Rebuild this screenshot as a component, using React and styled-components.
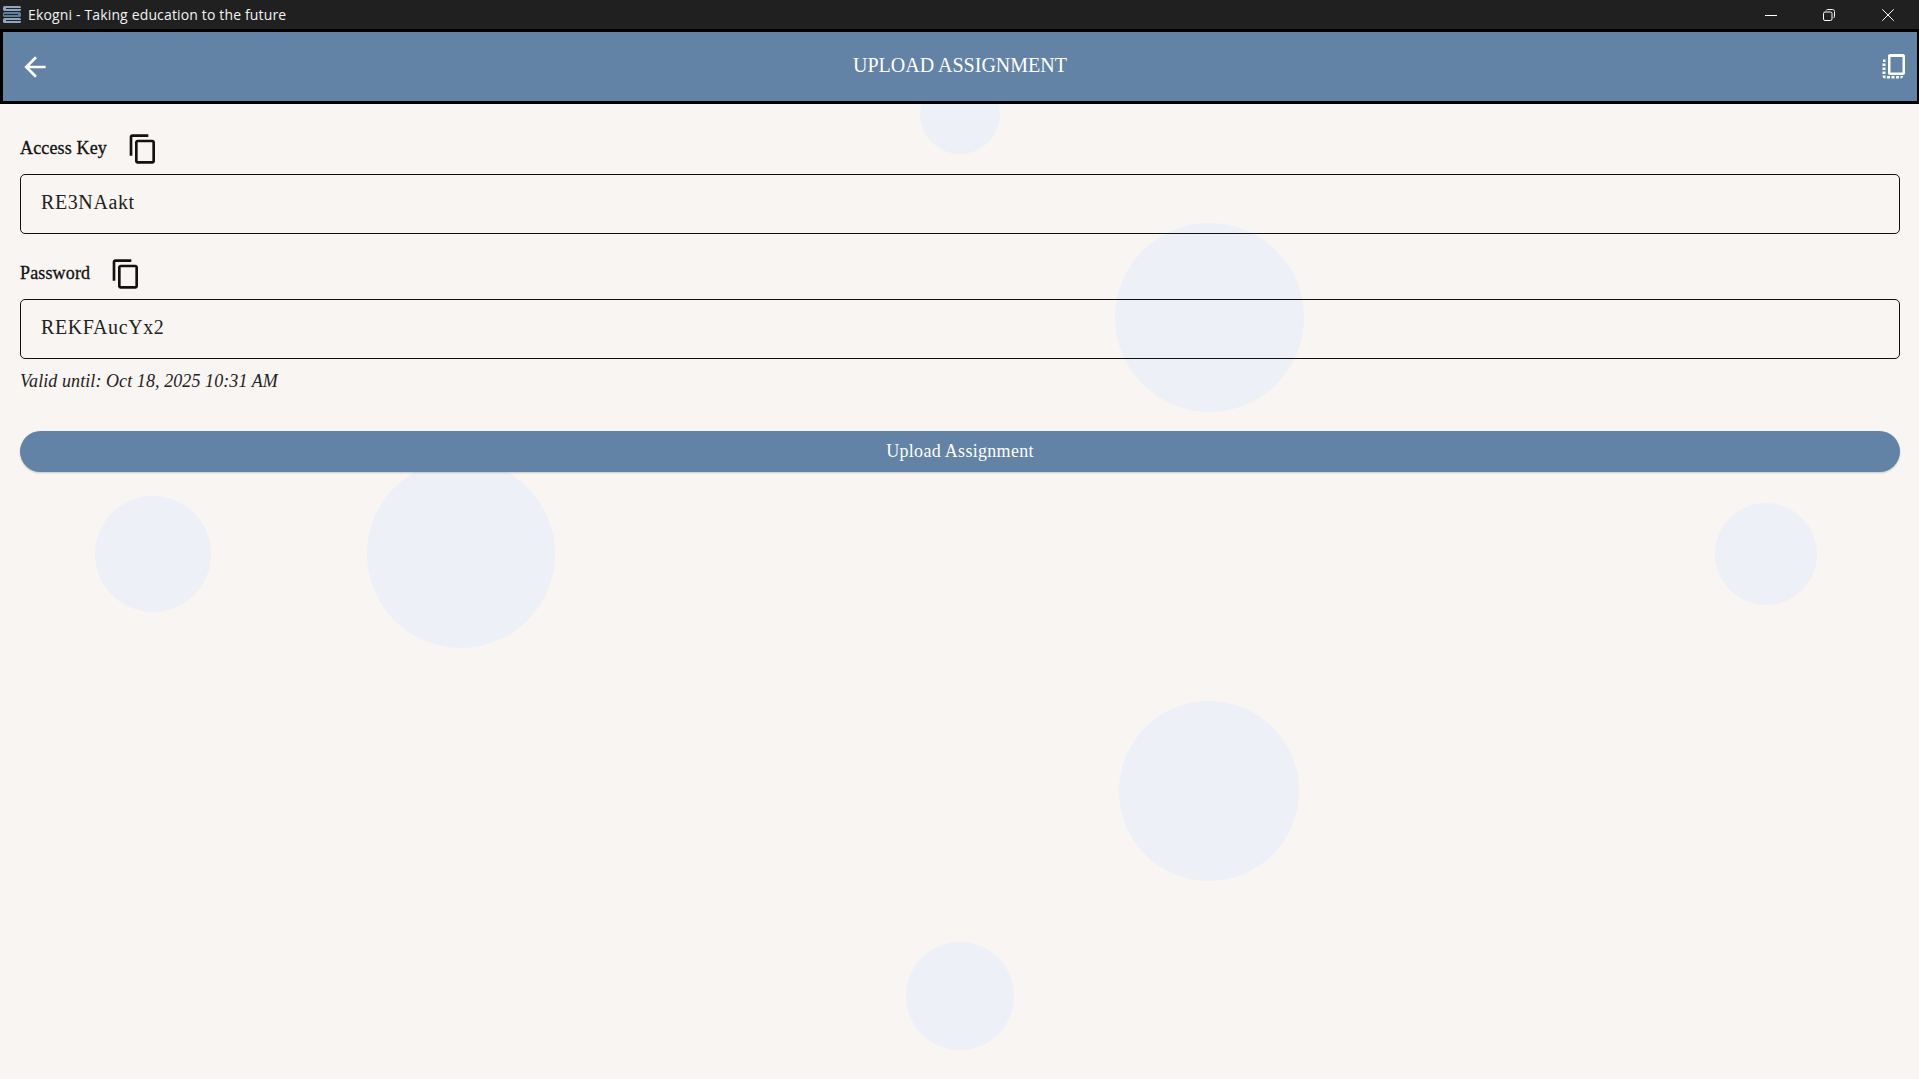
import styled, { createGlobalStyle } from "styled-components";

const blue = "#6282a6";
const serif = '"Liberation Serif", "DejaVu Serif", serif';

const GlobalStyle = createGlobalStyle`
  html, body {
    margin: 0;
    padding: 0;
    height: 100%;
    background: #f9f5f2;
  }
`;

const bubbles = [
  { x: 960, y: 114, r: 40 },
  { x: 1209.5, y: 317.5, r: 94.5 },
  { x: 460.5, y: 554, r: 94 },
  { x: 153, y: 554, r: 58 },
  { x: 1766, y: 554, r: 51 },
  { x: 1209, y: 790.5, r: 90 },
  { x: 959.5, y: 995.5, r: 54 },
];

const CopyIcon = () => (
  <svg width="32" height="32" viewBox="0 0 24 24" fill="#111">
    <path d="M16 1H4c-1.1 0-2 .9-2 2v14h2V3h12V1zm3 4H8c-1.1 0-2 .9-2 2v14c0 1.1.9 2 2 2h11c1.1 0 2-.9 2-2V7c0-1.1-.9-2-2-2zm0 16H8V7h11v14z" />
  </svg>
);

const CopyField = ({ label, value }) => (
  <Field>
    <LabelRow>
      <Label>{label}</Label>
      <IconBtn>
        <CopyIcon />
      </IconBtn>
    </LabelRow>
    <ValueBox>{value}</ValueBox>
  </Field>
);

const App = () => {
  return (
    <Page>
      <GlobalStyle />
      {bubbles.map((b, i) => (
        <Bubble
          key={i}
          style={{ left: b.x - b.r, top: b.y - b.r, width: b.r * 2, height: b.r * 2 }}
        />
      ))}
      <TitleBar>
        <AppIcon width="18" height="17" viewBox="0 0 18 17">
          <rect x="0" y="0" width="18" height="5" rx="1.5" fill="#8fa6bd" />
          <rect x="0" y="6" width="18" height="5" rx="1.5" fill="#5f7f9f" />
          <rect x="0" y="12" width="18" height="5" rx="1.5" fill="#8fa6bd" />
          <rect x="3" y="2" width="15" height="1" fill="#1c2630" />
          <rect x="1" y="8" width="14" height="1" fill="#1c2630" />
          <rect x="3" y="14" width="15" height="1" fill="#1c2630" />
        </AppIcon>
        <WindowTitle>Ekogni - Taking education to the future</WindowTitle>
        <WindowControls>
          <WinBtn>
            <svg width="12" height="12" viewBox="0 0 12 12" stroke="#fff" fill="none">
              <path d="M0 6.5h12" />
            </svg>
          </WinBtn>
          <WinBtn>
            <svg width="12" height="12" viewBox="0 0 12 12" stroke="#fff" fill="none">
              <rect x="0.5" y="3" width="8.5" height="8.5" rx="1.5" />
              <path d="M3 1.5C3.4 .8 4 .5 4.8 .5H9.5c1.2 0 2 .8 2 2V7.2c0 .8-.3 1.4-1 1.8" />
            </svg>
          </WinBtn>
          <WinBtn>
            <svg width="12" height="12" viewBox="0 0 12 12" stroke="#fff" fill="none">
              <path d="M.3.3l11.4 11.4M11.7.3L.3 11.7" />
            </svg>
          </WinBtn>
        </WindowControls>
      </TitleBar>
      <Header>
        <BackIcon width="32" height="32" viewBox="0 0 24 24" fill="#fff">
          <path d="M20 11H7.83l5.59-5.59L12 4l-8 8 8 8 1.41-1.41L7.83 13H20v-2z" />
        </BackIcon>
        <HeaderTitle>UPLOAD ASSIGNMENT</HeaderTitle>
        <svg width="24" height="28" viewBox="0 0 24 28" fill="#fff">
          <path d="M7 1.5C6 1.5 6 2.5 6 3v17c0 1 .8 2 2 2h13c1.200 0 2-1 2-2V3c0-1-.8-2-2-2H8zm1.500 2.500h12v15.500h-12z" fillRule="evenodd" />
          <path d="M1 6.500h2.500V9H1zM0.500 10.500h3V13h-3zM0.500 14.500h3V17h-3zM0.500 18.500h3V21h-3zM0.500 22.500h3V25.500C1.500 25.500 .5 24.500 .5 22.500zM5 23h3v2.500H5zM9.500 23h3v2.500h-3zM14 23h3v2.500h-3zM18.500 23h2.500c0 1.500-1 2.500-2.500 2.500z" />
        </svg>
      </Header>
      <Main>
        <CopyField label="Access Key" value="RE3NAakt" />
        <CopyField label="Password" value="REKFAucYx2" />
        <ValidUntil>Valid until: Oct 18, 2025 10:31 AM</ValidUntil>
        <UploadButton>Upload Assignment</UploadButton>
      </Main>
    </Page>
  );
};

const Page = styled.div`
  position: relative;
  height: 1079px;
  overflow: hidden;
  background: #f9f5f2;
  font-family: ${serif};
`;
const Bubble = styled.div`
  position: absolute;
  border-radius: 50%;
  background: #edf0f6;
`;
const TitleBar = styled.div`
  position: relative;
  display: flex;
  align-items: center;
  height: 29px;
  padding-left: 3px;
  background: #202020;
`;
const AppIcon = styled.svg`
  flex: none;
`;
const WindowTitle = styled.span`
  margin-left: 7px;
  font-family: "Open Sans", "Noto Sans", sans-serif;
  font-size: 14px;
  letter-spacing: 0.15px;
  color: #f2f2f2;
`;
const WindowControls = styled.div`
  display: flex;
  margin-left: auto;
  margin-right: 2px;
`;
const WinBtn = styled.div`
  display: flex;
  align-items: center;
  justify-content: center;
  width: 58.500px;
  height: 29px;
`;
const Header = styled.header`
  position: relative;
  display: flex;
  align-items: center;
  justify-content: space-between;
  box-sizing: border-box;
  height: 75px;
  padding: 0 11px 0 16px;
  background: ${blue};
  border: solid #000;
  border-width: 3px 2px 3px 3px;
`;
const BackIcon = styled.svg`
  flex: none;
`;
const HeaderTitle = styled.h1`
  position: absolute;
  left: 0;
  right: 0;
  margin: 0 0 2px;
  text-align: center;
  font-size: 20px;
  font-weight: 400;
  color: #fff;
`;
const Main = styled.main`
  position: relative;
  display: flex;
  flex-direction: column;
  gap: 13px;
  padding: 18px 19px 0 20px;
`;
const Field = styled.div`
  display: flex;
  flex-direction: column;
`;
const LabelRow = styled.div`
  display: flex;
  align-items: center;
  gap: 20px;
  height: 52px;
`;
const Label = styled.label`
  font-size: 18px;
  letter-spacing: 0.15px;
  color: #111;
  -webkit-text-stroke: 0.3px #111;
`;
const IconBtn = styled.div`
  display: flex;
  margin-top: 1px;
`;
const ValueBox = styled.div`
  display: flex;
  align-items: center;
  box-sizing: border-box;
  height: 60px;
  padding: 0 0 3px 20px;
  border: 1.500px solid #111;
  border-radius: 5px;
  font-size: 20px;
  letter-spacing: 0.6px;
  color: #222;
`;
const ValidUntil = styled.div`
  margin-top: -1px;
  font-size: 18px;
  font-style: italic;
  letter-spacing: 0.08px;
  color: #222;
`;
const UploadButton = styled.button`
  height: 41px;
  margin-top: 26px;
  border: none;
  border-radius: 21px;
  background: ${blue};
  box-shadow: 0 1px 2px rgba(0, 0, 0, 0.2);
  font-family: ${serif};
  font-size: 18px;
  letter-spacing: 0.3px;
  color: #fff;
`;

export default App;
